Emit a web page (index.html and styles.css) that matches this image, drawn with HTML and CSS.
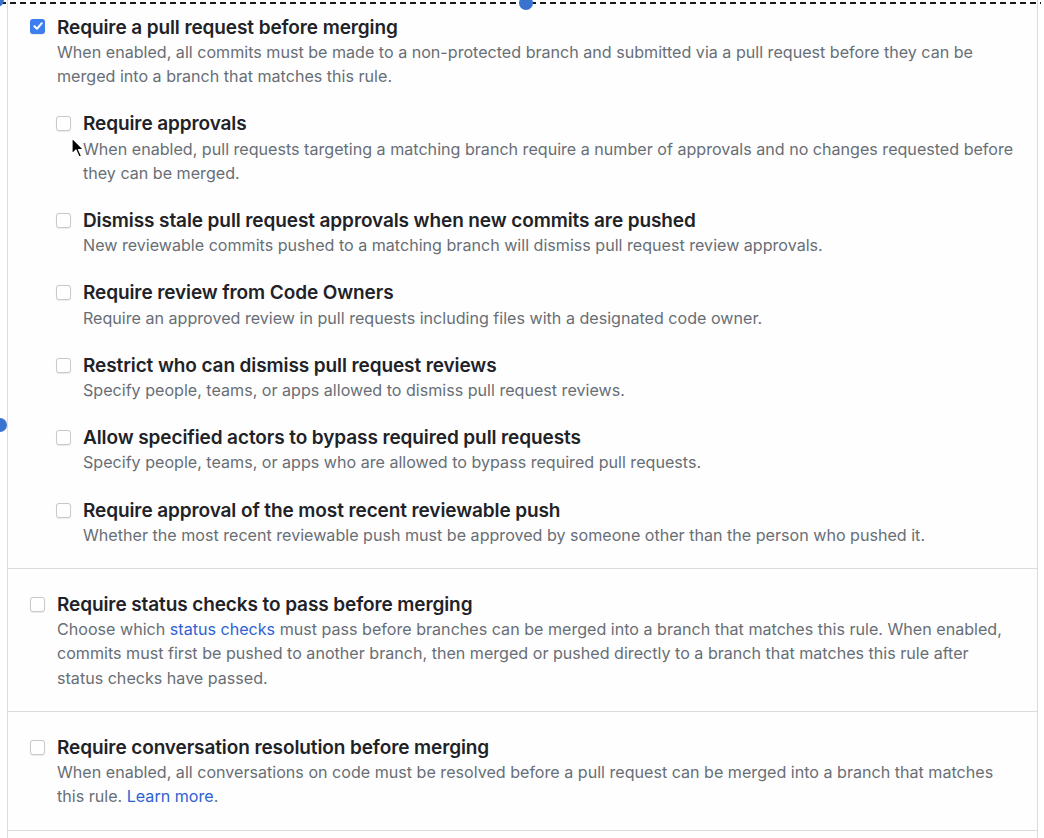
FILE: index.html
```html
<!DOCTYPE html>
<html>
<head>
<meta charset="utf-8">
<link rel="stylesheet" href="styles.css">
</head>
<body>
<div class="stage">
  <div class="panel">
    <section class="block first">
      <div class="opt">
        <span class="cb checked"><svg viewBox="0 0 14 14" width="14" height="14"><path d="M3.4 7.2 L6 9.8 L10.8 4.2" fill="none" stroke="#fff" stroke-width="2" stroke-linecap="round" stroke-linejoin="round"/></svg></span>
        <div class="txt">
          <div class="title">Require a pull request before merging</div>
          <div class="desc">When enabled, all commits must be made to a non-protected branch and submitted via a pull request before they can be merged into a branch that matches this rule.</div>
        </div>
      </div>
      <div class="subs">
        <div class="opt">
          <span class="cb"></span>
          <div class="txt">
            <div class="title">Require approvals</div>
            <div class="desc">When enabled, pull requests targeting a matching branch require a number of approvals and no changes requested before they can be merged.</div>
          </div>
        </div>
        <div class="opt">
          <span class="cb"></span>
          <div class="txt">
            <div class="title">Dismiss stale pull request approvals when new commits are pushed</div>
            <div class="desc">New reviewable commits pushed to a matching branch will dismiss pull request review approvals.</div>
          </div>
        </div>
        <div class="opt">
          <span class="cb"></span>
          <div class="txt">
            <div class="title">Require review from Code Owners</div>
            <div class="desc">Require an approved review in pull requests including files with a designated code owner.</div>
          </div>
        </div>
        <div class="opt">
          <span class="cb"></span>
          <div class="txt">
            <div class="title">Restrict who can dismiss pull request reviews</div>
            <div class="desc">Specify people, teams, or apps allowed to dismiss pull request reviews.</div>
          </div>
        </div>
        <div class="opt">
          <span class="cb"></span>
          <div class="txt">
            <div class="title">Allow specified actors to bypass required pull requests</div>
            <div class="desc">Specify people, teams, or apps who are allowed to bypass required pull requests.</div>
          </div>
        </div>
        <div class="opt">
          <span class="cb"></span>
          <div class="txt">
            <div class="title">Require approval of the most recent reviewable push</div>
            <div class="desc">Whether the most recent reviewable push must be approved by someone other than the person who pushed it.</div>
          </div>
        </div>
      </div>
    </section>
    <section class="block">
      <div class="opt">
        <span class="cb"></span>
        <div class="txt">
          <div class="title">Require status checks to pass before merging</div>
          <div class="desc">Choose which <a href="#">status checks</a> must pass before branches can be merged into a branch that matches this rule. When enabled, commits must first be pushed to another branch, then merged or pushed directly to a branch that matches this rule after status checks have passed.</div>
        </div>
      </div>
    </section>
    <section class="block">
      <div class="opt">
        <span class="cb"></span>
        <div class="txt">
          <div class="title">Require conversation resolution before merging</div>
          <div class="desc">When enabled, all conversations on code must be resolved before a pull request can be merged into a branch that matches this rule. <a href="#">Learn more</a>.</div>
        </div>
      </div>
    </section>
  </div>
  <div class="sel-line"></div>
  <span class="handle h-top"></span>
  <span class="handle h-left"></span>
  <span class="handle h-corner"></span>
  <svg class="cursor" width="14" height="22" viewBox="0 0 14 22"><path d="M1 1 L1 17 L5 13 L8 20 L10.5 19 L7.5 12.5 L12.5 12.5 Z" fill="#000" stroke="#fff" stroke-width="1.2" stroke-linejoin="round"/></svg>
</div>
</body>
</html>
```
FILE: styles.css
```css
html, body {
  margin: 0;
  padding: 0;
  background: #ffffff;
}
body {
  font-family: Inter, "Noto Sans", "Liberation Sans", sans-serif;
  color: #24292f;
  width: 1044px;
  height: 838px;
  overflow: hidden;
}
.stage {
  position: relative;
  width: 1044px;
  height: 838px;
}
.panel {
  margin-left: 7px;
  width: 1029px;
  height: 838px;
  border-left: 1px solid #d8dbe0;
  border-right: 1px solid #d8dbe0;
  background: #fefefe;
}
.block {
  padding: 23.8px 20px 21.2px 22px;
  border-bottom: 1px solid #d8dbe0;
}
.block.first {
  padding-top: 15.8px;
}
.opt {
  display: flex;
  gap: 12px;
  align-items: flex-start;
}
.subs {
  padding-left: 26px;
  margin-top: 24px;
  display: flex;
  flex-direction: column;
  gap: 24px;
}
.cb {
  flex: none;
  width: 13px;
  height: 13px;
  margin-top: 4px;
  border: 1px solid #c9c9cc;
  border-radius: 3px;
  background: #fff;
  box-shadow: 0 0.5px 1px rgba(0,0,0,0.08);
}
.cb.checked {
  width: 15px;
  height: 15px;
  margin-top: 3px;
  border: none;
  background: #3d7ef0;
  display: flex;
  align-items: center;
  justify-content: center;
}
.cb.checked svg {
  display: block;
}
.txt {
  flex: 1;
  min-width: 0;
}
.title {
  font-size: 19px;
  line-height: 24.2px;
  font-weight: 600;
  color: #1f2328;
  letter-spacing: -0.1px;
}
.desc {
  font-size: 16.1px;
  line-height: 24.2px;
  color: #686e76;
}
.desc a {
  color: #2f62d3;
  text-decoration: none;
}
.sel-line {
  position: absolute;
  left: 0;
  top: 2px;
  width: 1041px;
  height: 2px;
  background: repeating-linear-gradient(90deg, #1a1a1a 0 6px, transparent 6px 10px);
}
.handle {
  position: absolute;
  width: 14px;
  height: 14px;
  border-radius: 50%;
  background: #3a72d0;
}
.h-top {
  left: 519px;
  top: -4px;
}
.h-left {
  left: -7px;
  top: 418px;
}
.h-corner {
  left: -10px;
  top: -7px;
}
.cursor {
  position: absolute;
  left: 71px;
  top: 137px;
}
```
